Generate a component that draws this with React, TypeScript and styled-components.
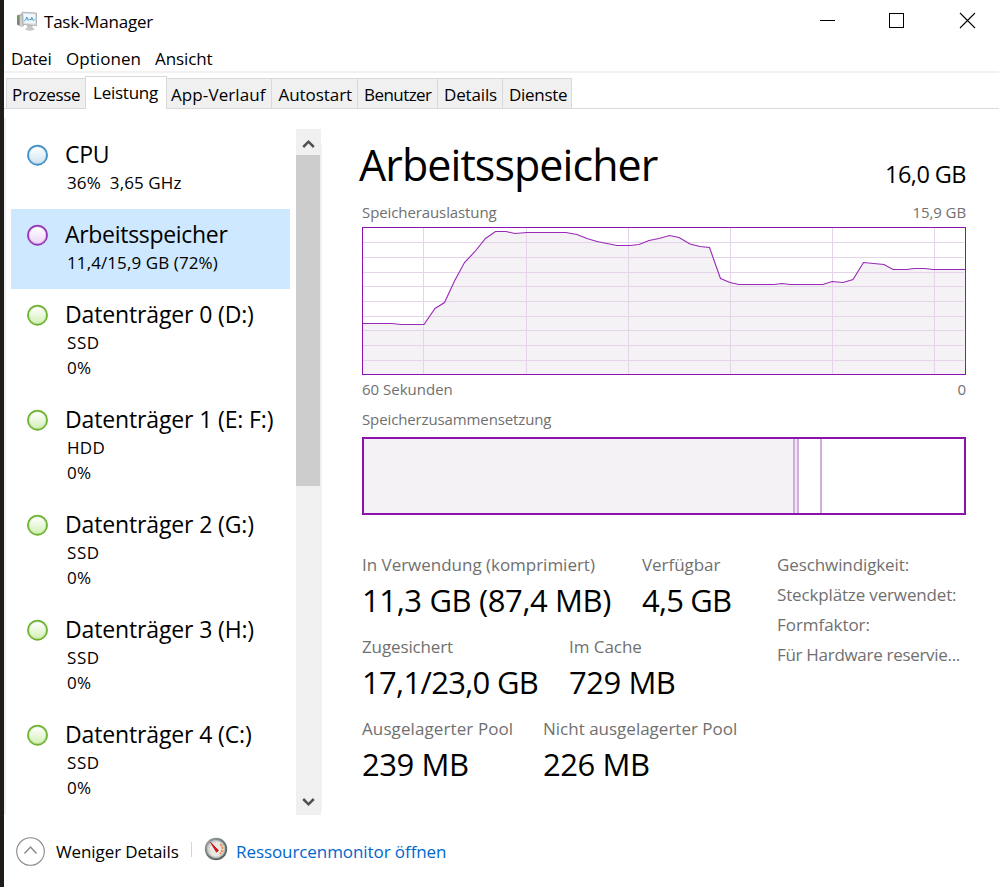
import React from "react";
import styled, { createGlobalStyle, css } from "styled-components";

const GlobalStyle = createGlobalStyle`
  *, *::before, *::after { box-sizing: border-box; }
  html, body { margin: 0; padding: 0; background: #fff; }
  body { font-family: "Open Sans", "Noto Sans", sans-serif; color: #000; overflow: hidden; }
`;

/* ---------- typography ---------- */

const Text = styled.span<{ $size?: number; $line?: number; $track?: number; $tone?: string }>`
  display: block;
  white-space: pre;
  font-size: ${(p) => p.$size ?? 17}px;
  line-height: ${(p) => p.$line ?? 24}px;
  letter-spacing: ${(p) => p.$track ?? 0}px;
  color: ${(p) => p.$tone ?? "#000"};
`;

const GREY = "#707070";
const PURPLE = "#8b12ae";

/* ---------- window frame ---------- */

const Window = styled.div`
  display: flex;
  flex-direction: column;
  width: 999px;
  height: 887px;
  border-left: 4px solid #1f1c19;
  background: #fff;
`;

const TitleBar = styled.header`
  display: flex;
  align-items: center;
  height: 43px;
  padding-left: 12px;
`;

const WindowTitle = styled.div`
  display: flex;
  flex: 1;
  align-items: center;
  gap: 6px;
`;

const WindowButtons = styled.div`
  display: flex;
  gap: 52px;
  padding: 0 23px 2px 0;
`;

const WindowButton = styled.button`
  display: flex;
  width: 17px;
  height: 17px;
  padding: 0;
  border: 0;
  background: none;
  & + &:last-child { margin-left: 2px; }
`;

const MenuBar = styled.nav`
  display: flex;
  gap: 14px;
  height: 30px;
  padding: 4px 0 0 7px;
  border-bottom: 2px solid #f1f1f1;
`;

const MenuItem = styled.div<{ $width: number }>`
  width: ${(p) => p.$width}px;
`;

const TabBar = styled.div`
  display: flex;
  align-items: flex-end;
  height: 36px;
  padding-left: 2px;
  box-shadow: inset 0 -1px #d9d9d9;
`;

const Tab = styled.div<{ $width: number; $inset: number; $active?: boolean; $first?: boolean }>`
  width: ${(p) => p.$width}px;
  height: 31px;
  padding: 4px 0 0 ${(p) => p.$inset}px;
  background: #f0f0f0;
  border: solid #d9d9d9;
  border-width: 1px 1px 1px 0;
  ${(p) => p.$first && css`border-width: 1px 0 1px 1px;`}
  ${(p) => p.$active && css`
    height: 33px;
    border-width: 1px 1px 0 1px;
    background: #fff;
  `}
`;

const Body = styled.main`
  display: flex;
  height: 706px;
`;

/* ---------- sidebar ---------- */

const Sidebar = styled.aside`
  display: flex;
  width: 318px;
  padding-top: 20px;
`;

const SidebarEdge = styled.div`
  width: 2px;
  height: 697px;
  margin-top: -11px;
  background: #f0f0f0;
`;

const DeviceList = styled.div`
  width: 279px;
  margin: 0 6px 0 5px;
`;

const Device = styled.div<{ $selected?: boolean; $tall?: boolean }>`
  display: flex;
  gap: 16px;
  height: ${(p) => (p.$tall ? 105 : 80)}px;
  padding: 10px 0 0 15px;
  background: ${(p) => (p.$selected ? "#cde8ff" : "transparent")};
`;

const DeviceMark = styled.svg`
  flex: none;
  width: 23px;
  height: 23px;
  margin-top: 5px;
`;

const DeviceText = styled.div`
  display: flex;
  flex-direction: column;
`;

const DeviceDetails = styled.div`
  padding: 1px 0 0 2px;
`;

const ScrollBar = styled.div`
  display: flex;
  flex-direction: column;
  width: 25px;
  height: 686px;
  background: #f0f0f0;
`;

const ScrollArrow = styled.div<{ $offset: number }>`
  display: flex;
  align-items: center;
  justify-content: center;
  height: 26px;
  padding-top: ${(p) => p.$offset}px;
`;

const ScrollThumb = styled.div`
  height: 331px;
  margin-right: 1px;
  margin-bottom: auto;
  background: #cdcdcd;
`;

const ScrollEdge = styled.div`
  width: 1px;
  height: 667px;
  margin-top: 15px;
  background: #f0f0f0;
`;

/* ---------- memory panel ---------- */

const Panel = styled.section`
  display: flex;
  flex-direction: column;
  width: 604px;
  margin-left: 40px;
  padding-top: 28px;
`;

const PanelHeader = styled.div`
  display: flex;
  justify-content: space-between;
  height: 63px;
  margin-left: -3px;
`;

const Capacity = styled.div`
  padding-top: 22px;
`;

const Caption = styled.div<{ $height?: number }>`
  display: flex;
  justify-content: space-between;
  height: ${(p) => p.$height ?? 26}px;
`;

const Chart = styled.svg`
  display: block;
  width: 604px;
  height: 148px;
  margin-bottom: 2px;
`;

const Composition = styled.div`
  display: flex;
  height: 78px;
  margin-top: 4px;
  border: 2px solid ${PURPLE};
`;

const Segment = styled.div<{ $width: number; $fill?: string }>`
  width: ${(p) => p.$width}px;
  background: ${(p) => p.$fill ?? "#fff"};
  border-right: 2px solid #cfaedb;
`;

const Summary = styled.div`
  display: flex;
  margin-top: 38px;
`;

const Stats = styled.div`
  width: 415px;
`;

const StatRow = styled.div`
  display: flex;
  height: 82px;
`;

const Stat = styled.div<{ $width?: number }>`
  width: ${(p) => (p.$width ? `${p.$width}px` : "auto")};
`;

const StatValue = styled(Text)`
  padding-top: 3px;
`;

const Hardware = styled.div`
  display: flex;
  flex-direction: column;
  gap: 6px;
`;

/* ---------- footer ---------- */

const Footer = styled.footer`
  display: flex;
  align-items: center;
  height: 72px;
  padding-left: 12px;
`;

const FooterLabel = styled(Text)`
  padding-top: 1px;
`;

const Toggle = styled.div`
  display: flex;
  align-items: center;
  gap: 11px;
  width: 174px;
`;

const Divider = styled.div`
  width: 1px;
  height: 15px;
  margin: 0 12px 4px 1px;
  background: #d4d4d4;
`;

const MonitorLink = styled.div`
  display: flex;
  align-items: center;
  gap: 8px;
`;

const GaugeIcon = styled.svg`
  width: 24px;
  height: 24px;
  margin-bottom: 4px;
`;

/* ---------- data ---------- */

const MENU = [
  { label: "Datei", track: -0.24, width: 41 },
  { label: "Optionen", track: 0.05, width: 75 },
  { label: "Ansicht", track: -0.1, width: 60 },
];

const TABS = [
  { label: "Prozesse", track: -0.3, width: 79, inset: 5 },
  { label: "Leistung", track: -0.24, width: 82, inset: 7 },
  { label: "App-Verlauf", track: 0.1, width: 105, inset: 4 },
  { label: "Autostart", track: -0.05, width: 86, inset: 6.5 },
  { label: "Benutzer", track: -0.55, width: 80, inset: 6 },
  { label: "Details", track: -0.15, width: 65, inset: 6 },
  { label: "Dienste", track: -0.3, width: 69, inset: 6 },
];

const ACTIVE_TAB = "Leistung";

type DeviceInfo = {
  id: string;
  name: string;
  track: number;
  color: string;
  fill: string;
  selected?: boolean;
  lines: { text: string; track: number }[];
};

const disk = (n: number, letter: string, kind: string): DeviceInfo => ({
  id: `disk${n}`,
  name: `Datenträger ${n} (${letter})`,
  track: -0.14,
  color: "#6bb12f",
  fill: "#cfeeb0",
  lines: [
    { text: kind, track: kind === "SSD" ? 0.6 : 0.3 },
    { text: "0%", track: 0.2 },
  ],
});

const DEVICES: DeviceInfo[] = [
  { id: "cpu", name: "CPU", track: -0.3, color: "#3b8dc4", fill: "#cbe1f0", lines: [{ text: "36%  3,65 GHz", track: 0.1 }] },
  { id: "mem", name: "Arbeitsspeicher", track: -0.3, color: "#9430b3", fill: "#ecd2f6", selected: true, lines: [{ text: "11,4/15,9 GB (72%)", track: 0.1 }] },
  disk(0, "D:", "SSD"),
  disk(1, "E: F:", "HDD"),
  disk(2, "G:", "SSD"),
  disk(3, "H:", "SSD"),
  disk(4, "C:", "SSD"),
];

const STATS = [
  [
    { label: "In Verwendung (komprimiert)", lt: -0.02, value: "11,3 GB (87,4 MB)", vt: -0.37, width: 280 },
    { label: "Verfügbar", lt: -0.05, value: "4,5 GB", vt: -0.81 },
  ],
  [
    { label: "Zugesichert", lt: -0.13, value: "17,1/23,0 GB", vt: -0.68, width: 207 },
    { label: "Im Cache", lt: -0.05, value: "729 MB", vt: -0.45 },
  ],
  [
    { label: "Ausgelagerter Pool", lt: 0.1, value: "239 MB", vt: -0.42, width: 181 },
    { label: "Nicht ausgelagerter Pool", lt: 0.0, value: "226 MB", vt: -0.42 },
  ],
];

const HARDWARE = [
  { label: "Geschwindigkeit:", track: -0.1 },
  { label: "Steckplätze verwendet:", track: -0.15 },
  { label: "Formfaktor:", track: -0.05 },
  { label: "Für Hardware reservie...", track: -0.3 },
];

const GRID_X = [61.5, 164.5, 266.5, 368.5, 470.5, 572.5];
const GRID_Y = [15.5, 30.5, 45.5, 59.5, 74.5, 89.5, 103.5, 118.5, 133.5];

const USAGE: [number, number][] = [
  [0.5, 96.5], [30, 96.5], [39, 97.5], [62, 97.5], [73, 81.5], [82.5, 75.5], [92.5, 54], [102.5, 35.5],
  [113, 24.5], [123.5, 11.5], [133.5, 4.5], [144, 4.5], [153, 6.5], [165, 5.5], [204, 5.5], [215, 7.5],
  [225, 11.5], [235, 14.5], [255, 18.5], [268, 18.5], [277, 17.5], [287, 13.5], [297, 11.5], [307.5, 8.5],
  [317, 10.5], [328, 17], [338, 19.5], [347.5, 20.5], [358.5, 51.5], [368, 55.5], [377, 57.5], [412, 57.5],
  [420, 56.5], [428, 57.5], [461, 57.5], [470, 54.5], [481, 55.5], [491, 52.5], [501.5, 35.5], [522, 37.5],
  [531, 42.5], [545, 42.5], [552, 41.5], [563, 41.5], [571, 42.5], [603.5, 42.5],
];

/* ---------- drawings ---------- */

const AppIcon = () => (
  <svg width="22" height="21" viewBox="0 0 22 21">
    <path d="M1 4.5 5.5 2.5 8 3v12l-2.5 1L1 13.5z" fill="#b9bbb9" />
    <path d="M1 4.5 3.5 4v10.7L1 13.5z" fill="#7d827d" />
    <path d="M1.6 5.6h1.8v2H1.6z" fill="#69b544" />
    <path d="M4.8 5v10.5M6.2 5v10" stroke="#e8e8e8" strokeWidth=".7" />
    <path d="M11 14h5l1 3.2 2 .8c-2 2.2-8 2.2-10.2 0l2.2-1z" fill="#c4c6c8" />
    <path d="M6 1.2 20.5 2v12.7L7 13.4z" fill="#d8dadc" stroke="#a4a8ab" strokeWidth=".8" />
    <path d="M7.5 2.7 19 3.2v9.5L8.3 11.9z" fill="#edf7fc" />
    <path d="M8.2 9.8 9.6 9l1.2-3 1.4 3.4 1.5-1.6 1.2 1.4 1-2.8 1.2 3 1.4-.8" fill="none" stroke="#3590c8" strokeWidth=".9" />
  </svg>
);

const Gauge = () => (
  <GaugeIcon viewBox="0 0 24 24">
    <defs>
      <linearGradient id="rim" x1="0" y1="0" x2="1" y2="1">
        <stop offset="0" stopColor="#a2a8a8" />
        <stop offset=".5" stopColor="#6d7676" />
        <stop offset="1" stopColor="#515a5b" />
      </linearGradient>
    </defs>
    <circle cx="12" cy="12" r="11.2" fill="url(#rim)" />
    <circle cx="12" cy="12" r="9.3" fill="#b9bfbe" />
    <circle cx="12" cy="12" r="7.8" fill="#e9e7e2" />
    <path d="M7 16.5A6.5 6.5 0 0 1 13 5.7" fill="none" stroke="#b9b7b2" strokeWidth="1" strokeDasharray="1 1" />
    <path d="M16.2 7.2a6.3 6.3 0 0 1-.3 9.8" fill="none" stroke="#e88a4c" strokeWidth="1.8" strokeDasharray="2.4 .7" />
    <path d="M6.6 5.4 14.4 13.6l-1.9 1.5z" fill="#d3131e" stroke="#d3131e" strokeWidth="1" strokeLinejoin="round" />
  </GaugeIcon>
);

const Mark = ({ device }: { device: DeviceInfo }) => (
  <DeviceMark viewBox="0 0 23 23">
    <defs>
      <linearGradient id={device.id} x1="0" y1="0" x2="0" y2="1">
        <stop offset=".1" stopColor="#fff" />
        <stop offset="1" stopColor={device.fill} />
      </linearGradient>
    </defs>
    <circle cx="11.5" cy="11.2" r="9.6" fill={`url(#${device.id})`} stroke={device.color} strokeWidth="1.7" />
    <circle cx="11.5" cy="11.2" r="8.3" fill="none" stroke={device.color} strokeOpacity=".25" />
  </DeviceMark>
);

const Chevron = ({ up }: { up?: boolean }) => (
  <svg width="13" height="10" viewBox="0 0 13 10">
    <path d={up ? "M1.2 8 6.5 2.7 11.8 8" : "M1.2 2 6.5 7.3 11.8 2"} fill="none" stroke="#505050" strokeWidth="2.5" />
  </svg>
);

const UsageChart = () => {
  const line = USAGE.map((p) => p.join(",")).join(" ");
  return (
    <Chart viewBox="0 0 604 148">
      <polygon points={`0.5,147.5 ${line} 603.5,147.5`} fill="#f4f2f5" />
      <g stroke="#e5d3e9">
        {GRID_X.map((x) => <path key={x} d={`M${x} 1V147`} />)}
        {GRID_Y.map((y) => <path key={y} d={`M1 ${y}H602`} />)}
      </g>
      <polyline points={line} fill="none" stroke="#9a28b8" strokeWidth="1.1" />
      <rect x=".5" y=".5" width="603" height="147" fill="none" stroke={PURPLE} />
    </Chart>
  );
};

export default function App() {
  return (
    <>
      <GlobalStyle />
      <Window>
        <TitleBar>
          <WindowTitle>
            <AppIcon />
            <Text $track={-0.22}>Task-Manager</Text>
          </WindowTitle>
          <WindowButtons>
            <WindowButton aria-label="Minimieren">
              <svg width="17" height="17"><path d="M1 8.5h15" stroke="#000" /></svg>
            </WindowButton>
            <WindowButton aria-label="Maximieren">
              <svg width="17" height="17"><rect x="1.5" y="1.5" width="14" height="14" fill="none" stroke="#000" /></svg>
            </WindowButton>
            <WindowButton aria-label="Schließen">
              <svg width="17" height="17"><path d="M1 1 16 16M16 1 1 16" stroke="#000" strokeWidth="1.1" /></svg>
            </WindowButton>
          </WindowButtons>
        </TitleBar>

        <MenuBar>
          {MENU.map((m) => (
            <MenuItem key={m.label} $width={m.width}><Text $track={m.track}>{m.label}</Text></MenuItem>
          ))}
        </MenuBar>

        <TabBar>
          {TABS.map((t, i) => (
            <Tab key={t.label} $width={t.width} $inset={t.inset} $active={t.label === ACTIVE_TAB} $first={i === 0}>
              <Text $track={t.track}>{t.label}</Text>
            </Tab>
          ))}
        </TabBar>

        <Body>
          <Sidebar>
            <SidebarEdge />
            <DeviceList>
              {DEVICES.map((d) => (
                <Device key={d.id} $selected={d.selected} $tall={d.lines.length > 1}>
                  <Mark device={d} />
                  <DeviceText>
                    <Text $size={23} $line={30} $track={d.track}>{d.name}</Text>
                    <DeviceDetails>
                      {d.lines.map((l) => <Text key={l.text} $line={25} $track={l.track}>{l.text}</Text>)}
                    </DeviceDetails>
                  </DeviceText>
                </Device>
              ))}
            </DeviceList>
            <ScrollBar>
              <ScrollArrow $offset={4}><Chevron up /></ScrollArrow>
              <ScrollThumb />
              <ScrollArrow $offset={0}><Chevron /></ScrollArrow>
            </ScrollBar>
            <ScrollEdge />
          </Sidebar>

          <Panel>
            <PanelHeader>
              <Text $size={43} $line={56} $track={-0.93}>Arbeitsspeicher</Text>
              <Capacity>
                <Text $size={23.5} $line={30} $track={-0.55}>16,0 GB</Text>
              </Capacity>
            </PanelHeader>
            <Caption $height={27}>
              <Text $size={15} $track={-0.1} $tone={GREY}>Speicherauslastung</Text>
              <Text $size={15} $track={-0.1} $tone={GREY}>15,9 GB</Text>
            </Caption>
            <UsageChart />
            <Caption>
              <Text $size={15} $track={0} $tone={GREY}>60 Sekunden</Text>
              <Text $size={15} $tone={GREY}>0</Text>
            </Caption>
            <Caption $height={30}>
              <Text $size={15} $line={32} $track={-0.12} $tone={GREY}>Speicherzusammensetzung</Text>
            </Caption>
            <Composition>
              <Segment $width={431} $fill="#f4f2f5" />
              <Segment $width={4} $fill="#f0e6f4" />
              <Segment $width={23} />
            </Composition>
            <Summary>
              <Stats>
                {STATS.map((row) => (
                  <StatRow key={row[0].label}>
                    {row.map((s) => (
                      <Stat key={s.label} $width={s.width}>
                        <Text $track={s.lt} $tone={GREY}>{s.label}</Text>
                        <StatValue $size={31} $line={40} $track={s.vt}>{s.value}</StatValue>
                      </Stat>
                    ))}
                  </StatRow>
                ))}
              </Stats>
              <Hardware>
                {HARDWARE.map((h) => <Text key={h.label} $track={h.track} $tone={GREY}>{h.label}</Text>)}
              </Hardware>
            </Summary>
          </Panel>
        </Body>

        <Footer>
          <Toggle>
            <svg width="29" height="29" viewBox="0 0 29 29">
              <circle cx="14.5" cy="14.5" r="13.8" fill="none" stroke="#8a8a8a" strokeWidth="1.1" />
              <path d="M8.5 16.5 14.5 10 20.5 16.5" fill="none" stroke="#8a8a8a" strokeWidth="1.5" />
            </svg>
            <FooterLabel $track={-0.1}>Weniger Details</FooterLabel>
          </Toggle>
          <Divider />
          <MonitorLink>
            <Gauge />
            <FooterLabel $track={-0.08} $tone="#0066cc">Ressourcenmonitor öffnen</FooterLabel>
          </MonitorLink>
        </Footer>
      </Window>
    </>
  );
}
